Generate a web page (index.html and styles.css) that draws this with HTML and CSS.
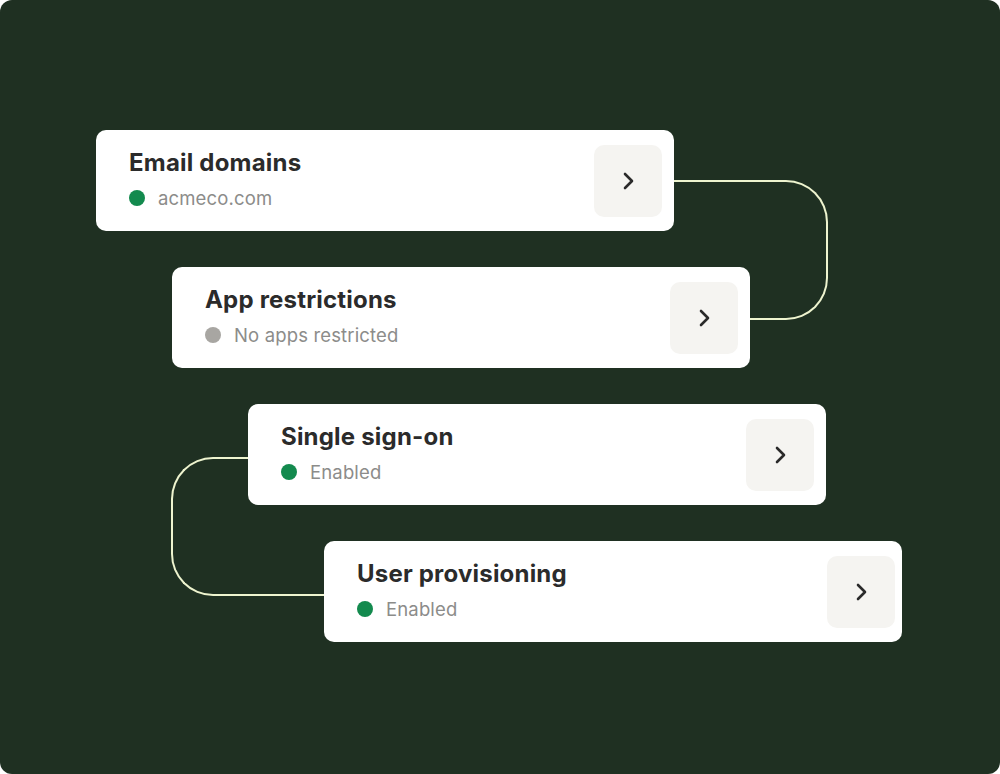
FILE: index.html
```html
<!DOCTYPE html>
<html lang="en">
  <head>
    <meta charset="UTF-8">
    <title>Security settings</title>
    <link rel="stylesheet" href="styles.css">
  </head>
  <body>
    <div class="frame">
      <div class="steps">
        <div class="card step-1">
          <div class="info">
            <div class="title">Email domains</div>
            <div class="status"><span class="dot on"></span>acmeco.com</div>
          </div>
          <button class="go" type="button">
            <svg width="14" height="22" viewBox="0 0 14 22"><path d="M4 4l7 7-7 7" fill="none" stroke="#2a2a2a" stroke-width="2.6" stroke-linecap="round" stroke-linejoin="round"/></svg>
          </button>
          <span class="link right"></span>
        </div>

        <div class="card step-2">
          <div class="info">
            <div class="title">App restrictions</div>
            <div class="status"><span class="dot off"></span>No apps restricted</div>
          </div>
          <button class="go" type="button">
            <svg width="14" height="22" viewBox="0 0 14 22"><path d="M4 4l7 7-7 7" fill="none" stroke="#2a2a2a" stroke-width="2.6" stroke-linecap="round" stroke-linejoin="round"/></svg>
          </button>
        </div>

        <div class="card step-3">
          <div class="info">
            <div class="title">Single sign-on</div>
            <div class="status"><span class="dot on"></span>Enabled</div>
          </div>
          <button class="go" type="button">
            <svg width="14" height="22" viewBox="0 0 14 22"><path d="M4 4l7 7-7 7" fill="none" stroke="#2a2a2a" stroke-width="2.6" stroke-linecap="round" stroke-linejoin="round"/></svg>
          </button>
        </div>

        <div class="card step-4">
          <div class="info">
            <div class="title">User provisioning</div>
            <div class="status"><span class="dot on"></span>Enabled</div>
          </div>
          <button class="go" type="button">
            <svg width="14" height="22" viewBox="0 0 14 22"><path d="M4 4l7 7-7 7" fill="none" stroke="#2a2a2a" stroke-width="2.6" stroke-linecap="round" stroke-linejoin="round"/></svg>
          </button>
          <span class="link left"></span>
        </div>
      </div>
    </div>
  </body>
</html>
```

FILE: styles.css
```css
body {
  margin: 0;
  padding: 0;
  background: #ffffff;
  font-family: 'Inter', 'Noto Sans', sans-serif;
}

.frame {
  width: 1000px;
  height: 774px;
  background: #1f3022;
  border-radius: 12px;
  overflow: hidden;
}

.steps {
  display: flex;
  flex-direction: column;
  gap: 36px;
  padding: 130px 0 0 96px;
}

.card {
  position: relative;
  width: 578px;
  height: 101px;
  box-sizing: border-box;
  padding: 0 12px 0 33px;
  background: #ffffff;
  border-radius: 10px;
  display: flex;
  align-items: center;
  justify-content: space-between;
}

.step-1 { margin-left: 0; z-index: 1; }
.step-2 { margin-left: 76px; z-index: 2; }
.step-3 { margin-left: 152px; z-index: 2; }
.step-4 { margin-left: 228px; z-index: 1; padding-right: 7px; }

.info {
  display: flex;
  flex-direction: column;
  gap: 9px;
  margin-top: -3px;
}

.title {
  font-size: 24px;
  font-weight: 700;
  color: #2b2b2b;
  line-height: 28px;
  letter-spacing: 0.2px;
}

.status {
  display: flex;
  align-items: center;
  gap: 13px;
  font-size: 18.5px;
  color: #8c8c8a;
  line-height: 24px;
  letter-spacing: 0.15px;
}

.dot {
  width: 16px;
  height: 16px;
  border-radius: 50%;
}

.dot.on { background: #138a4e; }
.dot.off { background: #a8a6a2; }

.go {
  width: 68px;
  height: 72px;
  border: none;
  border-radius: 10px;
  background: #f5f4f1;
  display: flex;
  align-items: center;
  justify-content: center;
  padding: 0;
  cursor: pointer;
}

/* connector lines between cards */
.link {
  position: absolute;
  box-sizing: border-box;
  border: 2px solid #eef4cf;
}

.link.right {
  top: 50px;
  left: 100%;
  width: 154px;
  height: 140px;
  border-left: none;
  border-radius: 0 42px 42px 0;
}

.link.left {
  top: -84px;
  right: 100%;
  width: 153px;
  height: 139px;
  border-right: none;
  border-radius: 42px 0 0 42px;
}
```
